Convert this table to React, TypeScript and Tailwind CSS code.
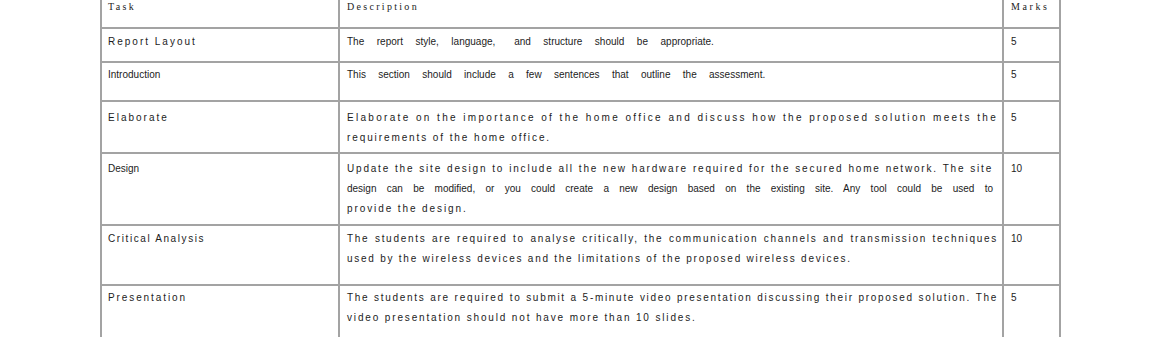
const body = "font-['Liberation_Sans',Arial,sans-serif] text-[10px] leading-[20px] text-[#1c1c1c]";

type Line = { text: string; cls: string };
type Row = {
  task: string;
  taskCls: string;
  marks: string;
  h: string;
  pt: string;
  lines: Line[];
};

const full = "whitespace-nowrap text-justify [text-align-last:justify]";
const plain = "whitespace-pre";

const rows: Row[] = [
  {
    task: "Report Layout",
    taskCls: "tracking-[2px]",
    marks: "5",
    h: "h-[34px]",
    pt: "pt-[3px]",
    lines: [
      {
        text: "The  report  style,  language,   and  structure  should  be  appropriate.",
        cls: plain + " [word-spacing:3.5px]",
      },
    ],
  },
  {
    task: "Introduction",
    taskCls: "",
    marks: "5",
    h: "h-[39px]",
    pt: "pt-[2px]",
    lines: [
      {
        text: "This  section  should  include  a  few  sentences  that  outline  the  assessment.",
        cls: plain + " [word-spacing:3.4px]",
      },
    ],
  },
  {
    task: "Elaborate",
    taskCls: "tracking-[2px]",
    marks: "5",
    h: "h-[52px]",
    pt: "pt-[6px]",
    lines: [
      {
        text: "Elaborate on the importance of the home office and discuss how the proposed solution meets the",
        cls: full + " tracking-[2.3px]",
      },
      { text: "requirements of the home office.", cls: plain + " tracking-[1.9px]" },
    ],
  },
  {
    task: "Design",
    taskCls: "",
    marks: "10",
    h: "h-[72px]",
    pt: "pt-[5px]",
    lines: [
      {
        text: "Update the site design to include all the new hardware required for the secured home network. The site",
        cls: full + " tracking-[1.8px] mr-[5px]",
      },
      {
        text: "design can be modified, or you could create a new design based on the existing site. Any tool could be used to",
        cls: full + " mr-[5px]",
      },
      { text: "provide the design.", cls: plain + " tracking-[1.9px]" },
    ],
  },
  {
    task: "Critical Analysis",
    taskCls: "tracking-[1.6px]",
    marks: "10",
    h: "h-[60px]",
    pt: "pt-[3px]",
    lines: [
      {
        text: "The students are required to analyse critically, the communication channels and transmission techniques",
        cls: full + " tracking-[1.7px]",
      },
      {
        text: "used by the wireless devices and the limitations of the proposed wireless devices.",
        cls: plain + " tracking-[1.75px]",
      },
    ],
  },
  {
    task: "Presentation",
    taskCls: "tracking-[1.9px]",
    marks: "5",
    h: "h-[60px]",
    pt: "pt-[2px]",
    lines: [
      {
        text: "The students are required to submit a 5-minute video presentation discussing their proposed solution. The",
        cls: full + " tracking-[1.7px]",
      },
      {
        text: "video presentation should not have more than 10 slides.",
        cls: plain + " tracking-[1.85px]",
      },
    ],
  },
];

const App = () => {
  return (
    <div className="w-[1157px] h-[337px] overflow-hidden bg-white">
      <div className="ml-[100px] w-[961px]">
        <div className="grid grid-cols-[238px_664px_57px] h-[29px] border-l-2 border-b-2 border-[#a3a3a3] font-['Liberation_Serif','Times_New_Roman',serif] text-[10px] leading-[12px] text-[#1c1c1c] tracking-[2.3px]">
          <div className="border-r-2 border-[#a3a3a3] pl-[6px] pt-[1px]">Task</div>
          <div className="border-r-2 border-[#a3a3a3] pl-[7px] pt-[1px]">Description</div>
          <div className="border-r-2 border-[#a3a3a3] pl-[7px] pt-[1px] tracking-[2.6px]">Marks</div>
        </div>

        {rows.map((row) => (
          <div
            key={row.task}
            className={`grid grid-cols-[238px_664px_57px] border-l-2 border-b-2 border-[#a3a3a3] ${row.h} ${body}`}
          >
            <div className={`border-r-2 border-[#a3a3a3] pl-[6px] ${row.pt} ${row.taskCls}`}>{row.task}</div>
            <div className={`border-r-2 border-[#a3a3a3] pl-[7px] pr-[4px] ${row.pt}`}>
              {row.lines.map((line, i) => (
                <div key={i} className={line.cls}>
                  {line.text}
                </div>
              ))}
            </div>
            <div className={`border-r-2 border-[#a3a3a3] pl-[7px] ${row.pt}`}>{row.marks}</div>
          </div>
        ))}
      </div>
    </div>
  );
};

export default App;
